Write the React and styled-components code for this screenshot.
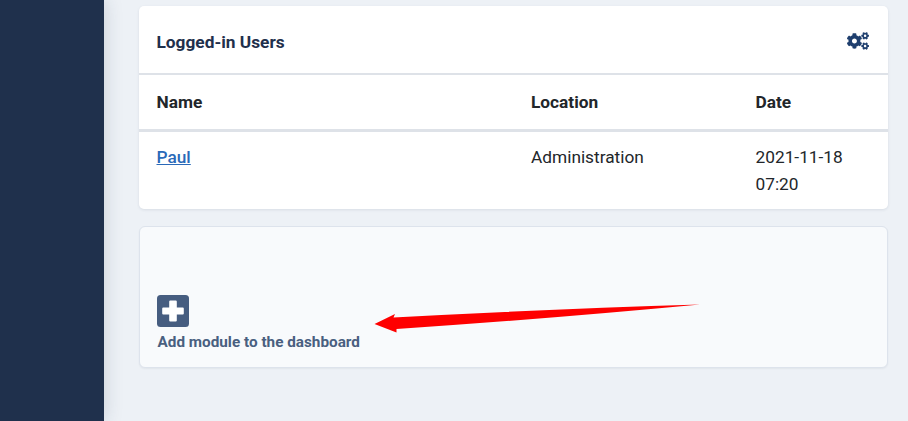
import React from "react";
import styled, { createGlobalStyle } from "styled-components";
import { FaCogs } from "react-icons/fa";

const Global = createGlobalStyle`
  html, body { margin: 0; padding: 0; height: 100%; }
  body { font-family: Roboto, "Liberation Sans", sans-serif; background: #eef1f6; }
  #root { height: 100%; }
`;

const Page = styled.div`
  position: relative;
  display: flex;
  width: 908px;
  height: 421px;
  overflow: hidden;
  background: #edf1f6;
`;

const Sidebar = styled.aside`
  flex: 0 0 104px;
  background: #1f304c;
  box-shadow: 0 0 18px rgba(31, 48, 76, 0.18);
`;

const Main = styled.main`
  flex: 1;
  display: flex;
  flex-direction: column;
  gap: 17px;
  padding: 6px 20px 0 35px;
`;

const Card = styled.section`
  background: #fff;
  border-radius: 5px;
  box-shadow: 0 1px 3px rgba(31, 48, 76, 0.1);
  height: 203px;
`;

const CardHeader = styled.header`
  display: flex;
  align-items: center;
  justify-content: space-between;
  box-sizing: border-box;
  height: 69px;
  padding: 5px 19px 0 17.5px;
  border-bottom: 2px solid #dee2e8;
`;

const Title = styled.h2`
  margin: 0;
  font-size: 17.3px;
  font-weight: 700;
  color: #1f304c;
`;

const Gear = styled(FaCogs)`
  display: block;
  width: 22px;
  height: 22px;
  margin-top: -2px;
  color: #1f3f6e;
`;

const Table = styled.table`
  width: 100%;
  border-collapse: collapse;
  table-layout: fixed;
  font-size: 17.3px;
  color: #22262a;
`;

const HeadCell = styled.th`
  box-sizing: border-box;
  width: ${(p) => p.$width};
  height: 55px;
  padding: 0 0 0 ${(p) => p.$inset};
  text-align: left;
  font-weight: 700;
  border-bottom: 3px solid #dee2e8;
`;

const Cell = styled.td`
  padding: 12px 30px 10px ${(p) => p.$inset};
  vertical-align: top;
  line-height: 27.5px;
`;

const UserLink = styled.a`
  color: #2a69b8;
  font-weight: 500;
  text-decoration: underline;
`;

const AddPanel = styled.section`
  box-sizing: border-box;
  display: flex;
  flex-direction: column;
  justify-content: flex-end;
  align-items: flex-start;
  height: 142px;
  padding: 0 18px 16px 17px;
  background: #f8fafc;
  border: 1px solid #dde3ec;
  border-radius: 6px;
  box-shadow: 0 1px 2px rgba(31, 48, 76, 0.06);
`;

const AddIcon = styled.svg`
  display: block;
  width: 32px;
  height: 32px;
  margin-bottom: 6px;
`;

const AddLabel = styled.span`
  padding-left: 0.5px;
  font-size: 15.3px;
  font-weight: 700;
  line-height: 18px;
  color: #495f80;
`;

const Arrow = styled.svg`
  position: absolute;
  left: 370px;
  top: 295px;
  width: 340px;
  height: 40px;
  pointer-events: none;
`;

export default function App() {
  return (
    <>
      <Global />
      <Page>
        <Sidebar />
        <Main>
          <Card>
            <CardHeader>
              <Title>Logged-in Users</Title>
              <Gear />
            </CardHeader>
            <Table>
              <thead>
                <tr>
                  <HeadCell $width="374px" $inset="17.5px">Name</HeadCell>
                  <HeadCell $width="224.5px" $inset="18px">Location</HeadCell>
                  <HeadCell $inset="18px">Date</HeadCell>
                </tr>
              </thead>
              <tbody>
                <tr>
                  <Cell $inset="17.5px"><UserLink href="#">Paul</UserLink></Cell>
                  <Cell $inset="18px">Administration</Cell>
                  <Cell $inset="18px">2021-11-18 07:20</Cell>
                </tr>
              </tbody>
            </Table>
          </Card>
          <AddPanel>
            <AddIcon viewBox="0 0 32 32">
              <rect width="32" height="32" rx="3.5" fill="#465d80" />
              <path
                d="M13.2 5.5h5.6a1 1 0 0 1 1 1v6h6a1 1 0 0 1 1 1v5a1 1 0 0 1-1 1h-6v6a1 1 0 0 1-1 1h-5.6a1 1 0 0 1-1-1v-6h-6a1 1 0 0 1-1-1v-5a1 1 0 0 1 1-1h6v-6a1 1 0 0 1 1-1z"
                fill="#fff"
              />
            </AddIcon>
            <AddLabel>Add module to the dashboard</AddLabel>
          </AddPanel>
        </Main>
        <Arrow viewBox="0 0 340 40">
          <path d="M4.5 29 L25 19 L23.5 22.5 Q170 14.5 330 9.5 Q170 24.5 26.5 34 L26.5 37.5 Z" fill="#fe0000" />
        </Arrow>
      </Page>
    </>
  );
}
